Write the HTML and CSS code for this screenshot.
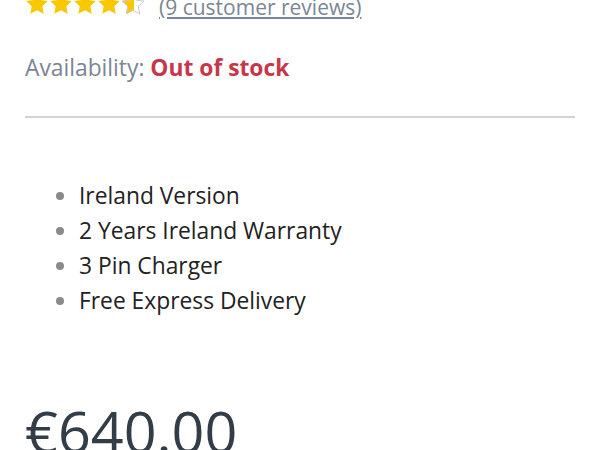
FILE: index.html
```html
<!DOCTYPE html>
<html lang="en">
<head>
    <meta charset="UTF-8">
    <meta name="viewport" content="width=device-width, initial-scale=1.0">
    <title>Product summary</title>
    <link rel="stylesheet" href="styles.css">
</head>
<body>
    <div class="summary">
        <div class="rating">
            <svg class="stars" width="124" height="24" viewBox="0 0 124 24">
                <defs>
                    <path id="star" d="M12 1.2l3.3 6.9 7.5 1-5.5 5.2 1.4 7.5L12 18.2l-6.7 3.6 1.4-7.5L1.2 9.1l7.5-1z"/>
                    <linearGradient id="half">
                        <stop offset="55%" stop-color="#f8c800"/>
                        <stop offset="55%" stop-color="#fff"/>
                    </linearGradient>
                </defs>
                <use href="#star" x="0" fill="#f8c800"/>
                <use href="#star" x="24" fill="#f8c800"/>
                <use href="#star" x="48" fill="#f8c800"/>
                <use href="#star" x="72" fill="#f8c800"/>
                <use href="#star" x="96" fill="url(#half)" stroke="#c9c9c9" stroke-width="1"/>
            </svg>
            <a href="#reviews" class="reviews-link">(9 customer reviews)</a>
        </div>

        <p class="stock">Availability: <strong>Out of stock</strong></p>

        <hr class="divider">

        <ul class="features">
            <li>Ireland Version</li>
            <li>2 Years Ireland Warranty</li>
            <li>3 Pin Charger</li>
            <li>Free Express Delivery</li>
        </ul>

        <p class="price">€640.00</p>
    </div>
</body>
</html>
```

FILE: styles.css
```css
body {
    margin: 0;
    font-family: "Open Sans", "Liberation Sans", sans-serif;
    background: #fff;
    overflow: hidden;
}
.summary {
    padding: 0 25px;
}
.rating {
    display: flex;
    align-items: center;
    gap: 10px;
    margin-top: -10px;
    height: 28px;
}
.stars {
    display: block;
    flex-shrink: 0;
}
.reviews-link {
    padding-top: 6px;
    color: #7a8694;
    font-size: 21px;
    text-decoration: underline;
    text-underline-offset: 2px;
}
.stock {
    margin: 0;
    padding-top: 33px;
    font-size: 22.8px;
    line-height: 34px;
    color: #7a8694;
}
.stock strong {
    color: #c8364a;
    font-weight: 700;
}
.divider {
    margin: 31px 0 0;
    border: none;
    border-top: 2px solid #d3d3d3;
}
.features {
    margin: 60px 0 0;
    padding-left: 54px;
    font-size: 22.8px;
    line-height: 35px;
    color: #222;
}
.features li::marker {
    color: #8a8a8a;
}
.price {
    margin: 79px 0 0;
    font-size: 57.5px;
    line-height: 1.2;
    color: #333d47;
}
```
